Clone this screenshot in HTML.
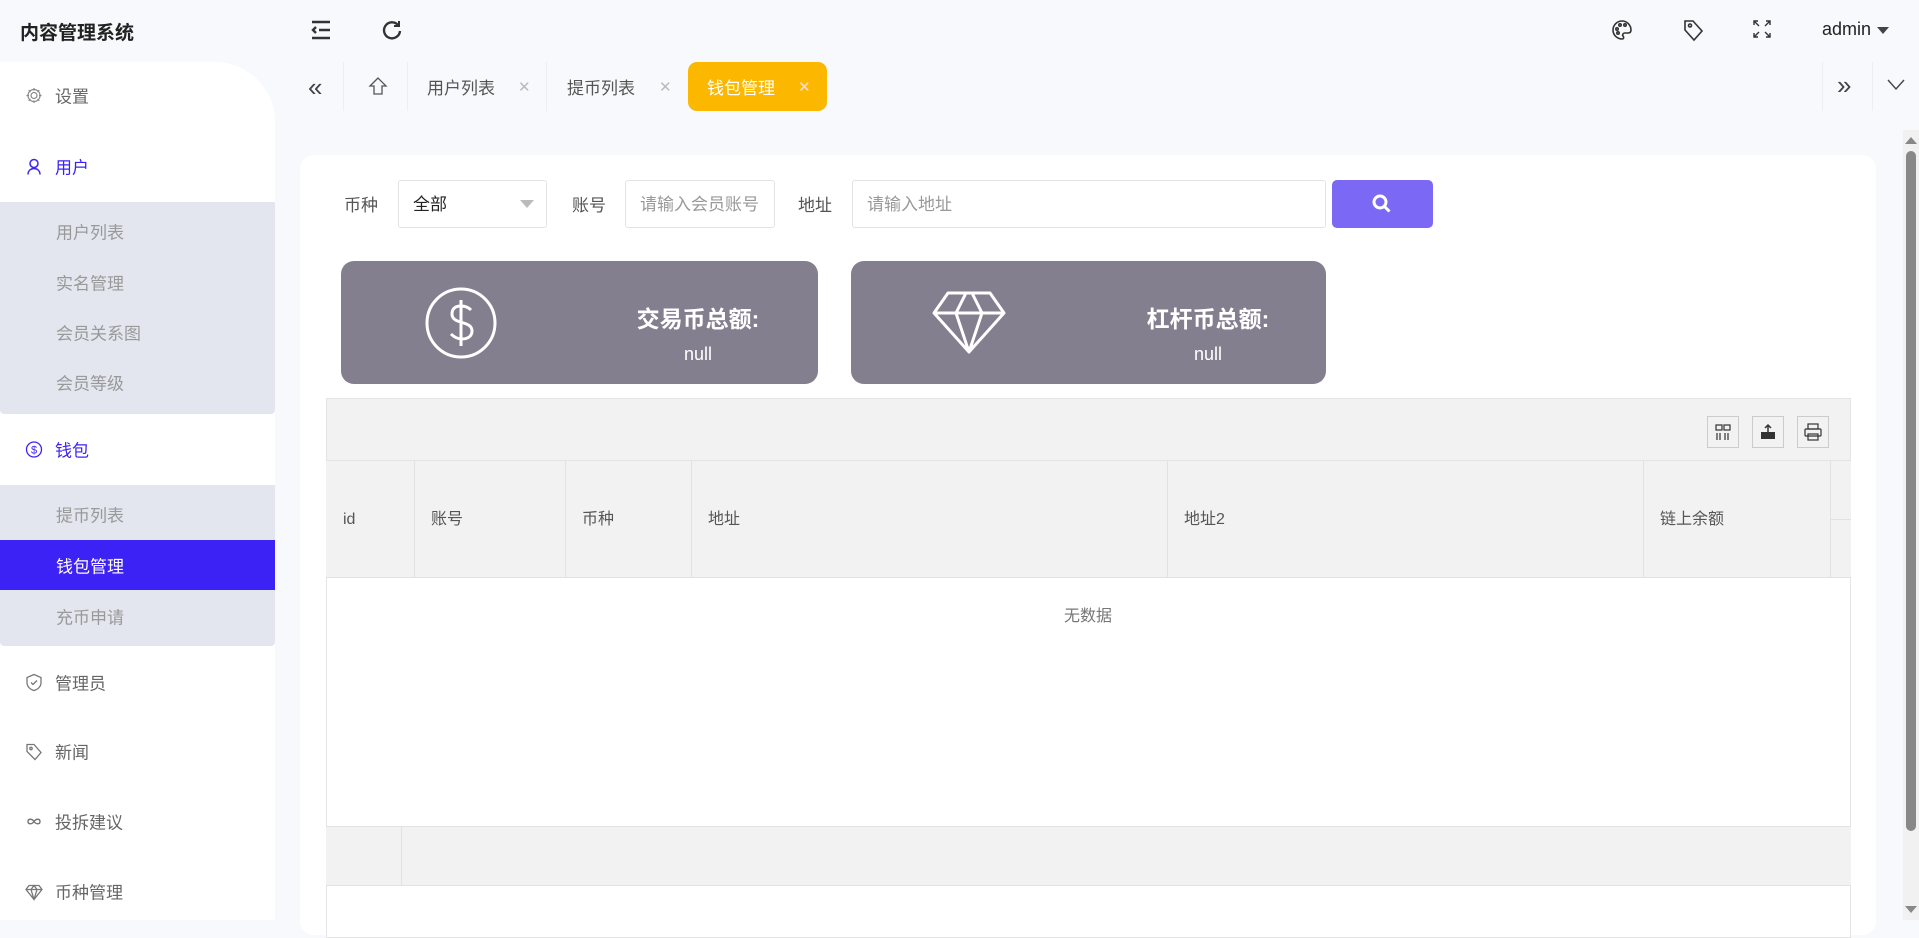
<!DOCTYPE html>
<html><head><meta charset="utf-8"><style>
*{box-sizing:border-box;margin:0;padding:0}
body{width:1919px;height:920px;overflow:hidden;background:#f8f9fc;font-family:"Liberation Sans","Noto Sans CJK SC",sans-serif;position:relative;color:#333}
.a{position:absolute}
.title{left:20px;top:18px;font-size:19px;font-weight:bold;color:#222}
.side{left:0;top:62px;width:275px;height:858px;background:#fff;border-top-right-radius:60px}
.mi{position:absolute;left:25px;font-size:17px;color:#666;display:flex;align-items:center;gap:12px;transform:translateY(-50%)}
.mi svg{width:18px;height:18px}
.sub{position:absolute;left:0;width:275px;background:#e3e6ee;border-radius:0 0 4px 4px}
.si{position:absolute;left:56px;font-size:17px;color:#999;transform:translateY(-50%)}
.tab{position:absolute;top:62px;height:49px;display:flex;align-items:center;font-size:17px;color:#555}
.x{color:#bbb;font-size:15px}
.card{left:300px;top:155px;width:1576px;height:780px;background:#fff;border-radius:14px}
.lbl{font-size:17px;color:#555;top:191px}
.inp{top:180px;height:48px;border:1px solid #e3e3e3;border-radius:3px;background:#fff;font-size:17px;color:#999;padding-left:14px;line-height:48px}
.stat{top:261px;height:123px;background:#837f8f;border-radius:13px;color:#fff}
.th{position:absolute;top:461px;height:117px;border-right:1px solid #e2e2e2;font-size:16px;color:#555;line-height:117px;padding-left:16px}
.tb{position:absolute;top:416px;width:32px;height:32px;border:1px solid #ccc;background:#f2f2f2}
</style></head><body>
<div class="a title">内容管理系统</div>
<svg class="a" style="left:310px;top:19px" width="22" height="22" viewBox="0 0 22 22" fill="none" stroke="#333" stroke-width="2.4"><path d="M2 3h18M9 11h11M2 19h18M6 8l-3 3 3 3"/></svg>
<svg class="a" style="left:381px;top:19px" width="22" height="22" viewBox="0 0 22 22" fill="none" stroke="#333" stroke-width="2.4"><path d="M17 6A8 8 0 1 0 19 12"/><path d="M18 2v5h-5" stroke-width="2"/></svg>
<svg class="a" style="left:1611px;top:19px" width="22" height="22" viewBox="0 0 22 22" fill="none" stroke="#333" stroke-width="1.6"><path d="M11 2a9 9 0 0 0 0 18c2 0 2-2 1-3s0-3 2-3h3c2 0 3-1 3-3a9 9 0 0 0-9-9z"/><circle cx="6" cy="10" r="1.2"/><circle cx="9" cy="6" r="1.2"/><circle cx="14" cy="6" r="1.2"/><circle cx="7" cy="14" r="1.2"/></svg>
<svg class="a" style="left:1682px;top:18px" width="22" height="24" viewBox="0 0 22 24" fill="none" stroke="#333" stroke-width="1.6"><path d="M3 3h8l9 10-8 9-9-10z"/><circle cx="8" cy="7.5" r="1.5"/></svg>
<svg class="a" style="left:1753px;top:20px" width="18" height="18" viewBox="0 0 18 18" fill="none" stroke="#333" stroke-width="1.4"><path d="M1 5V1h4M1 1l5 5M13 1h4v4M17 1l-5 5M1 13v4h4M1 17l5-5M17 13v4h-4M17 17l-5-5"/></svg>
<div class="a" style="left:1822px;top:19px;font-size:18px;color:#222">admin</div>
<div class="a" style="left:1877px;top:27px;border:6px solid transparent;border-top:7px solid #444"></div>

<div class="a side"></div>
<div class="mi" style="top:95px"><svg viewBox="0 0 18 18" fill="none" stroke="#888" stroke-width="1.2"><circle cx="9" cy="9" r="3"/><path d="M9 1.5v2.5M9 14v2.5M1.5 9h2.5M14 9h2.5M3.7 3.7l1.8 1.8M12.5 12.5l1.8 1.8M3.7 14.3l1.8-1.8M12.5 5.5l1.8-1.8"/><circle cx="9" cy="9" r="6"/></svg>设置</div>
<div class="mi" style="top:166px;color:#3d22f5"><svg viewBox="0 0 18 18" fill="none" stroke="#3d22f5" stroke-width="1.5"><circle cx="9" cy="6" r="4"/><path d="M3 17c0-4 3-6 6-6s6 2 6 6"/></svg>用户</div>
<div class="sub" style="top:202px;height:212px"></div>
<div class="si" style="top:231px">用户列表</div>
<div class="si" style="top:282px">实名管理</div>
<div class="si" style="top:332px">会员关系图</div>
<div class="si" style="top:382px">会员等级</div>
<div class="mi" style="top:449px;color:#3d22f5"><svg viewBox="0 0 18 18" fill="none" stroke="#3d22f5" stroke-width="1.3"><circle cx="9" cy="9" r="7.5"/><text x="9" y="13" font-size="11" text-anchor="middle" fill="#3d22f5" stroke="none" font-family="Liberation Sans">$</text></svg>钱包</div>
<div class="sub" style="top:485px;height:161px"></div>
<div class="si" style="top:514px">提币列表</div>
<div class="a" style="left:0;top:540px;width:275px;height:50px;background:#3d22f5"></div>
<div class="si" style="top:565px;color:#fff">钱包管理</div>
<div class="si" style="top:616px">充币申请</div>
<div class="mi" style="top:682px"><svg viewBox="0 0 18 18" fill="none" stroke="#777" stroke-width="1.3"><path d="M9 1l7 3v5c0 4-3 7-7 8-4-1-7-4-7-8V4z"/><path d="M6 9l2 2 4-4"/></svg>管理员</div>
<div class="mi" style="top:751px"><svg viewBox="0 0 18 18" fill="none" stroke="#777" stroke-width="1.3"><path d="M2 2h7l7 8-6 7-8-8z"/><circle cx="6" cy="6" r="1.2"/></svg>新闻</div>
<div class="mi" style="top:821px"><svg viewBox="0 0 18 18" fill="none" stroke="#777" stroke-width="1.4"><path d="M9 9c-2-3-6-3-6 0s4 3 6 0 6-3 6 0-4 3-6 0"/></svg>投拆建议</div>
<div class="mi" style="top:891px"><svg viewBox="0 0 18 18" fill="none" stroke="#777" stroke-width="1.3"><path d="M4 3h10l3 4-8 10-8-10zM1 7h16M9 17L6 7l3-4 3 4z"/></svg>币种管理</div>

<div class="a" style="left:308px;top:72px;font-size:26px;color:#444">«</div>
<div class="a" style="left:343px;top:62px;width:1px;height:49px;background:#eee"></div>
<svg class="a" style="left:368px;top:76px" width="20" height="20" viewBox="0 0 20 20" fill="none" stroke="#555" stroke-width="1.3"><path d="M10 2L2 10h4v8h8v-8h4z"/></svg>
<div class="a" style="left:407px;top:62px;width:1px;height:49px;background:#eee"></div>
<div class="tab" style="left:427px">用户列表<span class="x" style="margin-left:23px">✕</span></div>
<div class="a" style="left:546px;top:62px;width:1px;height:49px;background:#eee"></div>
<div class="tab" style="left:567px">提币列表<span class="x" style="margin-left:24px">✕</span></div>
<div class="tab" style="left:688px;width:139px;background:#fcb800;border-radius:9px;color:#fff;padding-left:19px">钱包管理<span class="x" style="margin-left:23px;color:#fde">✕</span></div>
<div class="a" style="left:1822px;top:62px;width:1px;height:49px;background:#eee"></div>
<div class="a" style="left:1837px;top:70px;font-size:26px;color:#444">»</div>
<div class="a" style="left:1872px;top:62px;width:1px;height:49px;background:#eee"></div>
<svg class="a" style="left:1887px;top:79px" width="18" height="12" viewBox="0 0 18 12" fill="none" stroke="#444" stroke-width="1.4"><path d="M1 1l8 9 8-9"/></svg>

<div class="a card"></div>
<div class="a lbl" style="left:344px">币种</div>
<div class="a inp" style="left:398px;width:149px;color:#222">全部</div>
<div class="a" style="left:520px;top:200px;border:7px solid transparent;border-top:8px solid #bbb"></div>
<div class="a lbl" style="left:572px">账号</div>
<div class="a inp" style="left:625px;width:150px">请输入会员账号</div>
<div class="a lbl" style="left:798px">地址</div>
<div class="a inp" style="left:852px;width:474px">请输入地址</div>
<div class="a" style="left:1332px;top:180px;width:101px;height:48px;background:#7b68f5;border-radius:5px"></div>
<svg class="a" style="left:1370px;top:192px" width="24" height="24" viewBox="0 0 24 24" fill="none" stroke="#fff" stroke-width="3"><circle cx="10" cy="10" r="6"/><path d="M14.5 14.5l5 5"/></svg>

<div class="a stat" style="left:341px;width:477px"></div>
<svg class="a" style="left:424px;top:286px" width="74" height="74" viewBox="0 0 74 74" fill="none" stroke="#fff" stroke-width="3"><circle cx="37" cy="37" r="34"/><path d="M47 24c-3-3-6-4-10-4-6 0-9 3-9 8 0 11 20 6 20 17 0 5-4 8-10 8-5 0-8-2-11-5M37 14v46"/></svg>
<div class="a" style="left:618px;top:300px;width:160px;text-align:center;color:#fff;font-size:23px;font-weight:bold">交易币总额:</div>
<div class="a" style="left:618px;top:344px;width:160px;text-align:center;color:#fff;font-size:18px">null</div>
<div class="a stat" style="left:851px;width:475px"></div>
<svg class="a" style="left:932px;top:290px" width="74" height="64" viewBox="0 0 74 64" fill="none" stroke="#fff" stroke-width="3" stroke-linejoin="round"><path d="M16 3h42l14 20-35 39L2 23zM2 23h70M37 62L24 23l10-20M37 62l13-39-10-20"/></svg>
<div class="a" style="left:1128px;top:300px;width:160px;text-align:center;color:#fff;font-size:23px;font-weight:bold">杠杆币总额:</div>
<div class="a" style="left:1128px;top:344px;width:160px;text-align:center;color:#fff;font-size:18px">null</div>

<div class="a" style="left:326px;top:398px;width:1525px;height:540px;border:1px solid #e4e4e4;background:#fff"></div>
<div class="a" style="left:326px;top:398px;width:1525px;height:63px;background:#f2f2f2;border:1px solid #e4e4e4"></div>
<div class="tb" style="left:1707px"><svg width="30" height="30" viewBox="0 0 30 30" fill="none" stroke="#333" stroke-width="1.2"><rect x="8" y="8" width="6" height="5"/><rect x="16" y="8" width="6" height="5"/><path d="M9 16v7M12 16v7M17 16v7M20 16v7"/></svg></div>
<div class="tb" style="left:1752px"><svg width="30" height="30" viewBox="0 0 30 30"><path d="M8 15h14v7H8z" fill="#333"/><path d="M15 16V8m-3 3l3-3 3 3" stroke="#333" stroke-width="1.5" fill="none"/></svg></div>
<div class="tb" style="left:1797px"><svg width="30" height="30" viewBox="0 0 30 30" fill="none" stroke="#333" stroke-width="1.2"><rect x="10" y="7" width="10" height="5"/><rect x="7" y="12" width="16" height="7" rx="1"/><rect x="10" y="17" width="10" height="6"/></svg></div>
<div class="a" style="left:326px;top:461px;width:1525px;height:117px;background:#f2f2f2;border-bottom:1px solid #e2e2e2"></div>
<div class="th" style="left:327px;width:88px">id</div>
<div class="th" style="left:415px;width:151px">账号</div>
<div class="th" style="left:566px;width:126px">币种</div>
<div class="th" style="left:692px;width:476px">地址</div>
<div class="th" style="left:1168px;width:476px">地址2</div>
<div class="th" style="left:1644px;width:187px">链上余额</div>
<div class="a" style="left:1831px;top:519px;width:20px;height:1px;background:#e2e2e2"></div>
<div class="a" style="left:1040px;top:602px;width:96px;text-align:center;font-size:16px;color:#777">无数据</div>
<div class="a" style="left:326px;top:826px;width:1525px;height:60px;background:#f2f2f2;border-top:1px solid #e2e2e2;border-bottom:1px solid #e2e2e2"></div>
<div class="a" style="left:401px;top:826px;width:1px;height:60px;background:#e2e2e2"></div>

<div class="a" style="left:1903px;top:130px;width:16px;height:790px;background:#f1f1f1"></div>
<div class="a" style="left:1905px;top:137px;border:6px solid transparent;border-bottom:7px solid #888;border-top:0"></div>
<div class="a" style="left:1906px;top:151px;width:10px;height:680px;background:#888;border-radius:5px"></div>
<div class="a" style="left:1905px;top:906px;border:6px solid transparent;border-top:7px solid #888;border-bottom:0"></div>
</body></html>
